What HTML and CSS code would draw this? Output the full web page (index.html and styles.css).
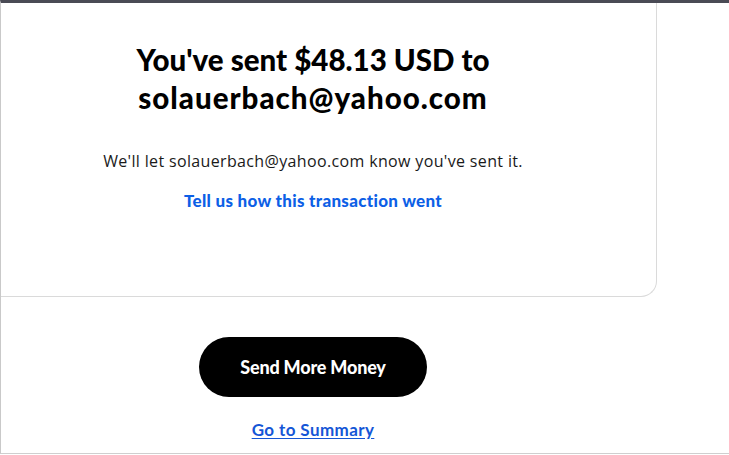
FILE: index.html
```html
<!DOCTYPE html>
<html lang="en">
<head>
<meta charset="utf-8">
<title>Payment sent</title>
<link rel="stylesheet" href="styles.css">
</head>
<body>
<div class="frame">
  <div class="column">
    <section class="card">
      <h1 class="title">You've sent $48.13 USD to<br><span class="recipient">solauerbach@yahoo.com</span></h1>
      <p class="note">We'll let solauerbach@yahoo.com know you've sent it.</p>
      <a class="feedback" href="#">Tell us how this transaction went</a>
    </section>
    <a class="primary" href="#">Send More Money</a>
    <a class="summary" href="#">Go to Summary</a>
  </div>
</div>
</body>
</html>
```

FILE: styles.css
```css
html, body {
  margin: 0;
  padding: 0;
  background: #ffffff;
}
.frame {
  box-sizing: border-box;
  height: 454px;
  border-top: 3px solid #4a4b55;
  border-left: 1px solid #c9c9c9;
  border-bottom: 1px solid #cfcfcf;
  overflow: hidden;
}
.column {
  width: 688px;
  margin-left: -32px;
  display: flex;
  flex-direction: column;
  align-items: center;
}
.card {
  box-sizing: border-box;
  width: 100%;
  height: 294px;
  border: 1px solid #dadada;
  border-top: none;
  border-radius: 0 0 16px 16px;
  display: flex;
  flex-direction: column;
  align-items: center;
  padding-top: 38px;
}
.title {
  margin: 0;
  font-family: "Lato", "Liberation Sans", sans-serif;
  font-weight: 900;
  font-size: 29.5px;
  line-height: 38px;
  color: #000;
  text-align: center;
}
.recipient {
  letter-spacing: 1px;
}
.note {
  margin: 34px 0 0;
  font-family: "Open Sans", "Liberation Sans", sans-serif;
  font-size: 16px;
  letter-spacing: 0.35px;
  line-height: 20px;
  color: #1a1a1a;
}
.feedback {
  margin-top: 19px;
  font-family: "Lato", "Liberation Sans", sans-serif;
  font-weight: 900;
  font-size: 17px;
  letter-spacing: 0.3px;
  line-height: 22px;
  color: #0d5fe6;
  text-decoration: none;
}
.primary {
  margin-top: 40px;
  box-sizing: border-box;
  width: 228px;
  height: 60px;
  border-radius: 30px;
  background: #000;
  color: #fff;
  display: flex;
  align-items: center;
  justify-content: center;
  font-family: "Lato", "Liberation Sans", sans-serif;
  font-weight: 900;
  font-size: 18px;
  letter-spacing: -0.2px;
  text-decoration: none;
}
.summary {
  margin-top: 22px;
  font-family: "Lato", "Liberation Sans", sans-serif;
  font-weight: 700;
  font-size: 17px;
  letter-spacing: 0.4px;
  line-height: 22px;
  color: #1556d6;
  text-decoration: underline;
  text-underline-offset: 2px;
}
```
